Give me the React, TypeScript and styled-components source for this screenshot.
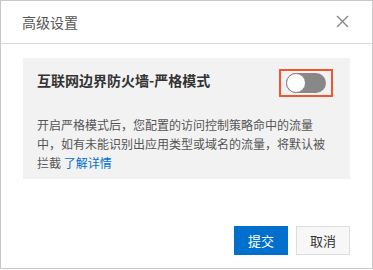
import styled, { createGlobalStyle } from "styled-components";

const GlobalStyle = createGlobalStyle`
  html, body {
    margin: 0;
    padding: 0;
    background: #fff;
  }
  body {
    font-family: "Noto Sans CJK SC", "Noto Sans", "Liberation Sans", sans-serif;
  }
`;

const Dialog = styled.div`
  width: 373px;
  height: 269px;
  box-sizing: border-box;
  border: 1px solid #c8c8c8;
  display: flex;
  flex-direction: column;
  background: #fff;
`;

const Header = styled.div`
  height: 43px;
  box-sizing: border-box;
  border-bottom: 1px solid #d9d9d9;
  display: flex;
  align-items: center;
  justify-content: space-between;
  padding: 0 23px 1px 21px;
`;

const Title = styled.div`
  font-size: 14px;
  color: #555;
  line-height: 20px;
`;

const CloseButton = styled.button`
  width: 14px;
  height: 14px;
  padding: 0;
  border: none;
  background: none;
  cursor: pointer;
  display: flex;
  align-items: center;
  justify-content: center;
`;

const Body = styled.div`
  flex: 1;
  padding: 14px 22px 0 22px;
`;

const Panel = styled.div`
  background: #f2f2f2;
  padding: 11px 17px 7px 14px;
`;

const PanelHead = styled.div`
  display: flex;
  align-items: flex-start;
  justify-content: space-between;
  height: 28px;
`;

const PanelTitle = styled.div`
  font-size: 14px;
  font-weight: bold;
  color: #333;
  line-height: 22px;
`;

const Highlight = styled.div`
  border: 2px solid #f3562e;
  width: 54px;
  height: 28px;
  box-sizing: border-box;
  display: flex;
  align-items: center;
  justify-content: center;
`;

const Switch = styled.button<{ $on: boolean }>`
  position: relative;
  width: 40px;
  height: 20px;
  border-radius: 10px;
  border: none;
  padding: 0;
  background: ${(p) => (p.$on ? "#0070cc" : "#888")};
  cursor: pointer;

  span {
    position: absolute;
    top: 0;
    left: ${(p) => (p.$on ? "20px" : "0")};
    width: 20px;
    height: 20px;
    box-sizing: border-box;
    border-radius: 50%;
    background: #fff;
    border: 1px solid #888;
  }
`;

const Desc = styled.p`
  margin: 18px 0 0;
  max-width: 292px;
  font-size: 12px;
  line-height: 19px;
  color: #555;

  a {
    color: #0070cc;
    text-decoration: none;
  }
`;

const Footer = styled.div`
  display: flex;
  justify-content: flex-end;
  gap: 8px;
  padding: 0 22px 13px 0;
`;

const Btn = styled.button<{ $primary?: boolean }>`
  width: 54px;
  height: 29px;
  box-sizing: border-box;
  font-family: inherit;
  font-size: 13px;
  cursor: pointer;
  border: 1px solid ${(p) => (p.$primary ? "#0070cc" : "#ddd")};
  background: ${(p) => (p.$primary ? "#0070cc" : "#f7f7f7")};
  color: ${(p) => (p.$primary ? "#fff" : "#333")};
`;

export default function App() {
  return (
    <>
      <GlobalStyle />
      <Dialog>
        <Header>
          <Title>高级设置</Title>
          <CloseButton aria-label="关闭">
            <svg width="13" height="13" viewBox="0 0 13 13">
              <path d="M1 1 L12 12 M12 1 L1 12" stroke="#888" strokeWidth="1.4" />
            </svg>
          </CloseButton>
        </Header>
        <Body>
          <Panel>
            <PanelHead>
              <PanelTitle>互联网边界防火墙-严格模式</PanelTitle>
              <Highlight>
                <Switch $on={false}>
                  <span />
                </Switch>
              </Highlight>
            </PanelHead>
            <Desc>
              开启严格模式后，您配置的访问控制策略命中的流量中，如有未能识别出应用类型或域名的流量，将默认被拦截 <a href="#">了解详情</a>
            </Desc>
          </Panel>
        </Body>
        <Footer>
          <Btn $primary>提交</Btn>
          <Btn>取消</Btn>
        </Footer>
      </Dialog>
    </>
  );
}
